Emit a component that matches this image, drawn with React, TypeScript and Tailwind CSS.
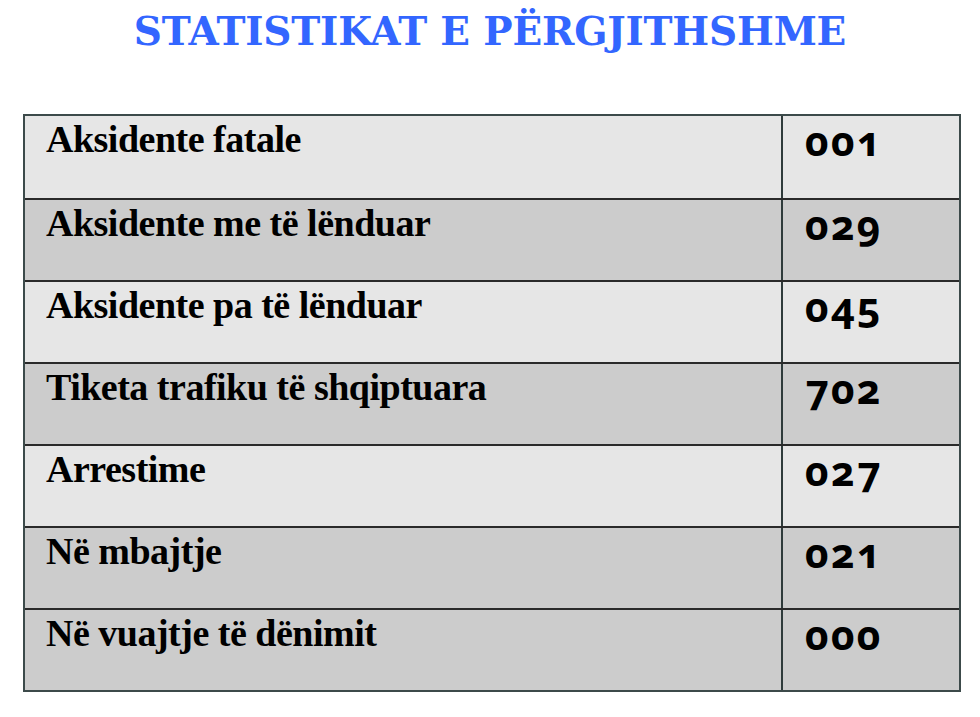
import React from "react";

const rows: [string, string, boolean][] = [
  ["Aksidente fatale", "001", false],
  ["Aksidente me të lënduar", "029", true],
  ["Aksidente pa të lënduar", "045", false],
  ["Tiketa trafiku të shqiptuara", "702", true],
  ["Arrestime", "027", false],
  ["Në mbajtje", "021", true],
  ["Në vuajtje të dënimit", "000", true],
];

export default function App() {
  return (
    <div className="w-[980px] h-[717px] bg-white overflow-hidden">
      <h1 className="text-center text-[#3366ff] font-bold text-[39px] leading-none pt-[12px] tracking-[-0.2px] font-['DejaVu_Serif',serif]">
        STATISTIKAT E PËRGJITHSHME
      </h1>
      <div className="mt-[63px] ml-[23px] w-[938px] border-2 border-[#3c4a4a] shadow-[inset_-1px_0_0_#a8d8d8]">
        {rows.map(([label, num, dark], i) => (
          <div
            key={label}
            className={`flex h-[82px] ${dark ? "bg-[#cccccc]" : "bg-[#e6e6e6]"} ${
              i > 0 ? "border-t-2 border-[#2a2a2a]" : ""
            }`}
          >
            <div className="flex-1 pl-[21px] pt-[3px] text-[38px] leading-[40px] font-bold text-black tracking-[-0.5px] border-r-2 border-[#2f3b3b] font-['Liberation_Serif',serif]">
              {label}
            </div>
            <div className="w-[176px] pl-[22px] pt-[2px] text-[41px] leading-[44px] font-bold text-black tracking-[2px] oldstyle-nums font-['Noto_Sans',sans-serif]">
              {num}
            </div>
          </div>
        ))}
      </div>
    </div>
  );
}
